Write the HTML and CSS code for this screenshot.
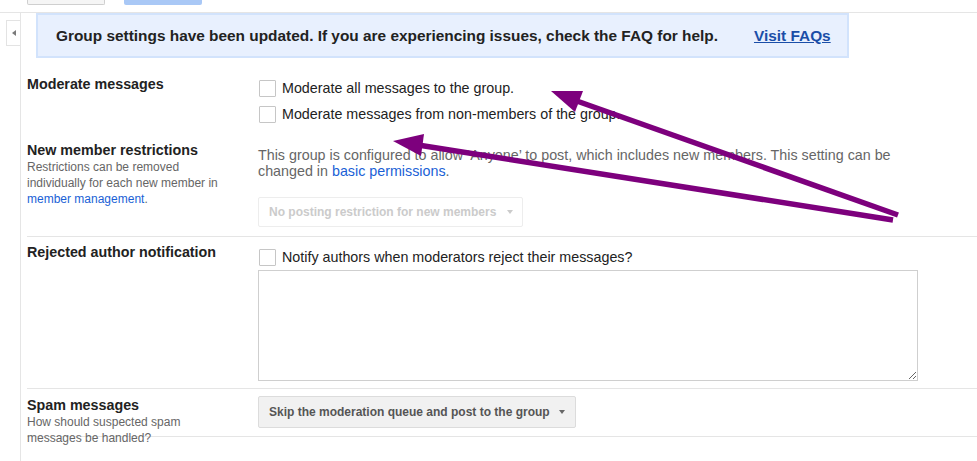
FILE: index.html
```html
<!DOCTYPE html>
<html>
<head>
<meta charset="utf-8">
<link rel="stylesheet" href="styles.css">
</head>
<body>
<div class="topbar">
  <span class="tbtn tbtn-plain"></span>
  <span class="tbtn tbtn-blue"></span>
</div>
<div class="main">
  <div class="sidebar">
    <div class="collapse"><span class="tri-left"></span></div>
  </div>
  <div class="content">
    <div class="banner">
      <span class="banner-text">Group settings have been updated. If you are experiencing issues, check the FAQ for help.</span>
      <a class="banner-link">Visit FAQs</a>
    </div>

    <div class="row row-mod">
      <div class="label-col">
        <div class="label">Moderate messages</div>
      </div>
      <div class="ctrl-col ctrl-check">
        <div class="check-item"><span class="cbox"></span>Moderate all messages to the group.</div>
        <div class="check-item"><span class="cbox"></span>Moderate messages from non-members of the group.</div>
      </div>
    </div>

    <div class="row row-new sep">
      <div class="label-col">
        <div class="label">New member restrictions</div>
        <div class="sub">Restrictions can be removed individually for each new member in <a class="link">member management</a>.</div>
      </div>
      <div class="ctrl-col ctrl-text">
        <div class="info">This group is configured to allow ‘Anyone’ to post, which includes new members. This setting can be changed in <a class="link">basic permissions</a>.</div>
        <div class="select select-disabled">No posting restriction for new members<span class="caret"></span></div>
      </div>
    </div>

    <div class="row row-rej sep">
      <div class="label-col">
        <div class="label">Rejected author notification</div>
      </div>
      <div class="ctrl-col ctrl-rej">
        <div class="check-item"><span class="cbox"></span>Notify authors when moderators reject their messages?</div>
        <textarea class="notify-text"></textarea>
      </div>
    </div>

    <div class="row row-spam sep">
      <div class="label-col">
        <div class="label">Spam messages</div>
        <div class="sub sub-narrow">How should suspected spam messages be handled?</div>
      </div>
      <div class="ctrl-col ctrl-spam">
        <div class="select select-active">Skip the moderation queue and post to the group<span class="caret"></span></div>
      </div>
    </div>
  </div>
</div>

<svg class="arrows" width="977" height="461" viewBox="0 0 977 461">
  <line x1="898" y1="215" x2="574" y2="100" stroke="#7d007d" stroke-width="5.5"/>
  <polygon points="551,91 583,91 575,112" fill="#7d007d"/>
  <line x1="893" y1="220" x2="418" y2="145" stroke="#7d007d" stroke-width="5.5"/>
  <polygon points="393,141 424,134 421,156" fill="#7d007d"/>
</svg>
</body>
</html>
```
FILE: styles.css
```css
* { box-sizing: border-box; }
body {
  margin: 0;
  font-family: "Liberation Sans", Arial, sans-serif;
  color: #222;
  background: #fff;
  width: 977px;
  height: 461px;
  overflow: hidden;
  position: relative;
}
.topbar {
  height: 13px;
  border-bottom: 1px solid #e5e5e5;
  display: flex;
  padding-left: 27px;
  gap: 19px;
  overflow: hidden;
}
.tbtn {
  display: block;
  width: 78px;
  height: 5px;
  border-radius: 0 0 2px 2px;
}
.tbtn-plain {
  background: #f5f5f5;
  border: 1px solid #cfcfcf;
  border-top: none;
}
.tbtn-blue {
  background: #a9c8f6;
}
.main {
  display: flex;
  height: 448px;
}
.sidebar {
  width: 21px;
  border-right: 1px solid #e5e5e5;
  padding-top: 7px;
  padding-left: 6px;
}
.collapse {
  width: 14px;
  height: 26px;
  border: 1px solid #e3e3e3;
  border-right: none;
  display: flex;
  align-items: center;
  justify-content: center;
}
.tri-left {
  width: 0;
  height: 0;
  border-top: 3.5px solid transparent;
  border-bottom: 3.5px solid transparent;
  border-right: 4px solid #7a7a7a;
}
.content {
  flex: 1;
  padding-left: 6px;
}
.banner {
  margin-left: 9px;
  width: 813px;
  height: 45px;
  background: #e8f0fe;
  border: 2px solid #d2e3fc;
  display: flex;
  align-items: center;
  padding-left: 18px;
  font-size: 15.4px;
  font-weight: bold;
  white-space: nowrap;
}
.banner-text { color: #222; }
.banner-link {
  margin-left: 36px;
  color: #1a4ea8;
  text-decoration: underline;
}
.row {
  display: flex;
}
.sep {
  border-bottom: 1px solid #e5e5e5;
}
.label-col {
  width: 231px;
  flex: none;
}
.label {
  font-size: 14.3px;
  font-weight: bold;
  line-height: 18px;
  color: #222;
}
.sub {
  font-size: 12px;
  line-height: 16px;
  color: #666;
  width: 200px;
}
.sub-narrow { width: 170px; }
.link { color: #1a5fd6; text-decoration: none; }
.ctrl-col {
  width: 660px;
  flex: none;
}
.check-item {
  display: flex;
  align-items: center;
  height: 18px;
  font-size: 14.3px;
  color: #222;
  white-space: nowrap;
}
.check-item + .check-item { margin-top: 8px; }
.cbox {
  width: 17px;
  height: 17px;
  border: 1px solid #c6c6c6;
  border-radius: 1px;
  background: #fff;
  margin-right: 6px;
  margin-left: 1px;
  flex: none;
}
.row-mod .label-col { padding-top: 17px; }
.row-mod .ctrl-col { padding-top: 21px; }
.row-new .label-col { padding-top: 18px; }
.row-new .ctrl-col { padding-top: 25px; padding-bottom: 9px; }
.info {
  font-size: 14.3px;
  line-height: 15.5px;
  color: #666;
}
.select {
  display: inline-flex;
  align-items: center;
  font-size: 12px;
  font-weight: bold;
  padding: 0 9px 0 10px;
  border-radius: 2px;
  white-space: nowrap;
}
.caret {
  width: 0;
  height: 0;
  border-left: 3.5px solid transparent;
  border-right: 3.5px solid transparent;
  border-top: 4px solid currentColor;
  margin-left: 11px;
}
.select-disabled {
  margin-top: 18px;
  height: 30px;
  border: 1px solid #ededed;
  color: #cbcbcb;
}
.row-rej .label-col { padding-top: 6px; }
.row-rej .ctrl-col { padding-top: 11px; padding-bottom: 7px; }
.notify-text {
  display: block;
  margin-top: 4px;
  width: 660px;
  height: 111px;
  border: 1px solid #cfcfcf;
  border-radius: 0;
  resize: both;
  font-family: inherit;
}
.row-spam { height: 48px; }
.row-spam .label-col { padding-top: 7px; }
.row-spam .ctrl-col { padding-top: 7px; }
.select-active {
  height: 32px;
  background: #f1f1f1;
  border: 1px solid #dcdcdc;
  color: #555;
  padding-right: 10px;
}
.select-active .caret { margin-left: 9px; color: #666; }
.arrows {
  position: absolute;
  left: 0;
  top: 0;
  pointer-events: none;
}
```
